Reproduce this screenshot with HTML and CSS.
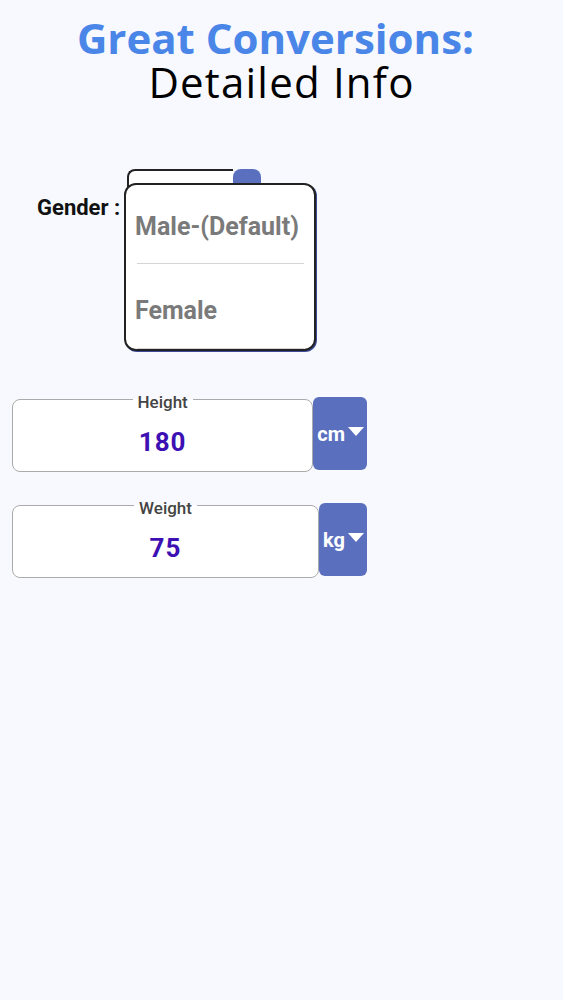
FILE: index.html
```html
<!DOCTYPE html>
<html lang="en">
<head>
<meta charset="UTF-8">
<meta name="viewport" content="width=device-width, initial-scale=1.0">
<title>Detailed Info</title>
<link rel="stylesheet" href="styles.css">
</head>
<body>
<div class="page">
  <h1 class="title">
    <span class="title-top">Great Conversions:</span>
    <span class="title-sub">Detailed Info</span>
  </h1>

  <div class="gender-row">
    <div class="gender-label">Gender :</div>
    <div class="select-wrap">
      <div class="select">
        <div class="select-box"></div>
        <div class="select-btn"></div>
      </div>
      <ul class="menu">
        <li class="menu-item">Male-(Default)</li>
        <li class="menu-item">Female</li>
      </ul>
    </div>
  </div>

  <div class="measure-row">
    <fieldset class="field">
      <legend>Height</legend>
      <div class="field-value">180</div>
    </fieldset>
    <button type="button" class="unit-btn">cm
      <svg class="caret" width="16" height="9" viewBox="0 0 16 9"><path d="M0 0 H16 L8 9 Z" fill="#fff"/></svg>
    </button>
  </div>

  <div class="measure-row">
    <fieldset class="field">
      <legend>Weight</legend>
      <div class="field-value">75</div>
    </fieldset>
    <button type="button" class="unit-btn">kg
      <svg class="caret" width="16" height="9" viewBox="0 0 16 9"><path d="M0 0 H16 L8 9 Z" fill="#fff"/></svg>
    </button>
  </div>
</div>
</body>
</html>
```

FILE: styles.css
```css
body {
  margin: 0;
  background-color: #f7f9fe;
  font-family: Roboto, "Noto Sans", sans-serif;
}
.page {
  height: 1000px;
}
.title {
  margin: 16px 0 0;
  text-align: center;
  font-family: "Open Sans", "Noto Sans", sans-serif;
  font-size: 42px;
  line-height: 44px;
}
.title-top {
  display: block;
  padding-right: 12px;
  color: #4a86e8;
  font-weight: 700;
}
.title-sub {
  display: block;
  color: #000;
  font-weight: 400;
  letter-spacing: 1.2px;
}
.gender-row {
  display: flex;
  align-items: center;
  margin: 65px 0 0 37px;
}
.gender-label {
  font-size: 22px;
  font-weight: 700;
  color: #111;
  width: 90px;
}
.select-wrap {
  position: relative;
}
.select {
  display: flex;
  height: 76px;
}
.select-box {
  width: 104px;
  background: #fff;
  border: 2px solid #222;
  border-right: none;
  border-radius: 8px 0 0 8px;
}
.select-btn {
  width: 28px;
  background: #5b6fbf;
  border-radius: 8px 8px 0 0;
}
.menu {
  position: absolute;
  top: 14px;
  left: -3px;
  width: 188px;
  margin: 0;
  padding: 0;
  list-style: none;
  background: #fff;
  border: 2px solid #222;
  border-radius: 12px;
  box-shadow: 1px 1px 0 #3c4a9a;
}
.menu-item {
  height: 79px;
  line-height: 83px;
  padding-left: 9px;
  font-size: 25px;
  font-weight: 700;
  color: #7a7a7a;
  position: relative;
}
.menu-item + .menu-item {
  height: 85px;
  line-height: 94px;
}
.menu-item:after {
  content: "";
  position: absolute;
  left: 11px;
  right: 10px;
  bottom: 0;
  border-bottom: 1px solid #d4d4d4;
}
.measure-row {
  display: flex;
  align-items: flex-start;
  width: 355px;
  margin: 143px 0 0 12px;
}
.measure-row + .measure-row {
  margin-top: 22px;
}
.field {
  flex: 1;
  margin: 0;
  padding: 0;
  min-width: 0;
  height: 84px;
  box-sizing: border-box;
  background: #fff;
  border: 1px solid #aaa;
  border-radius: 8px;
}
.field legend {
  margin: 0 auto;
  padding: 6px 5px 0;
  font-size: 17px;
  line-height: 16px;
  font-weight: 500;
  color: #444;
}
.field-value {
  text-align: center;
  font-size: 26px;
  font-weight: 700;
  color: #3c10b2;
  line-height: 64px;
  letter-spacing: 1px;
}
.unit-btn {
  display: flex;
  align-items: center;
  gap: 3px;
  height: 73px;
  margin-top: 9px;
  padding: 0 3px 0 4px;
  background: #5b6fbf;
  color: #fff;
  border: none;
  border-radius: 6px;
  font-family: Roboto, "Noto Sans", sans-serif;
  font-size: 20px;
  font-weight: 700;
}
.caret {
  margin-top: -4px;
}
```
